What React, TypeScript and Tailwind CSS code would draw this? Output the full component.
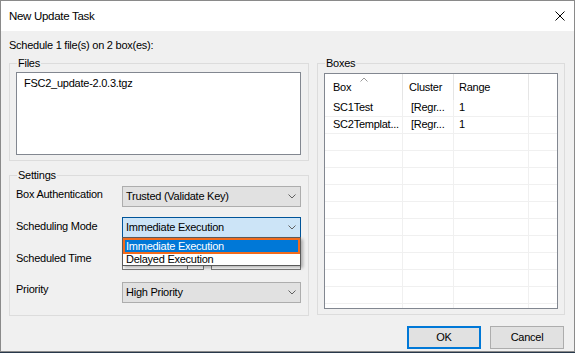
import React from 'react';

const font = "font-['Liberation_Sans',Arial,sans-serif] text-[11px] leading-[13px] tracking-[-0.25px] text-black";

function Chevron() {
  return (
    <svg width="8" height="5" viewBox="0 0 8 5" className="shrink-0">
      <path d="M0.5 0.5 L4 4 L7.5 0.5" fill="none" stroke="#606060" strokeWidth="1" />
    </svg>
  );
}

function Combo({ value, focused }: { value: string; focused?: boolean }) {
  return (
    <div
      className={
        focused
          ? 'h-[21px] w-[179px] border border-[#005499] bg-[#cce4f7] flex items-center justify-between pl-[3px] pr-[4px]'
          : 'h-[21px] w-[179px] border border-[#adadad] bg-[#e1e1e1] flex items-center justify-between pl-[3px] pr-[4px]'
      }
    >
      <span>{value}</span>
      <Chevron />
    </div>
  );
}

const rows = [
  { box: 'SC1Test', cluster: '[Regr...', range: '1' },
  { box: 'SC2Templat...', cluster: '[Regr...', range: '1' },
];

export default function App() {
  const filler = Array.from({ length: 13 - rows.length });

  return (
    <div className={`w-[575px] h-[353px] bg-[#27384a] overflow-hidden ${font}`}>
      <div className="h-[352px] border border-[#8a8a8a] flex flex-col bg-[#f0f0f0]">
        {/* title bar */}
        <div className="h-[30px] bg-white flex items-center justify-between pl-[8px] pr-[9px]">
          <span className="text-[11.5px] tracking-[-0.3px]">New Update Task</span>
          <svg width="10" height="10" viewBox="0 0 10 10">
            <path d="M0.5 0.5 L9.5 9.5 M9.5 0.5 L0.5 9.5" stroke="#000" strokeWidth="1" />
          </svg>
        </div>

        <div className="flex-1 flex flex-col pl-[8px] pr-[9px] pt-[8px]">
          <p>Schedule 1 file(s) on 2 box(es):</p>

          <div className="flex gap-[8px] mt-[5px]">
            {/* left column */}
            <div className="w-[300px] flex flex-col">
              <fieldset className="h-[104px] border border-[#dcdcdc] pl-[6px] pr-[7px]">
                <legend className="ml-[1px] px-[1px]">Files</legend>
                <div className="mt-[2px] h-[83px] border border-[#828790] bg-white pl-[7px] pt-[4px]">
                  FSC2_update-2.0.3.tgz
                </div>
              </fieldset>

              <fieldset className="mt-[8px] h-[147px] border border-[#dcdcdc] pl-[6px] pr-[7px]">
                <legend className="ml-[1px] px-[1px]">Settings</legend>
                <div className="mt-[4px] flex flex-col">
                  <div className="flex justify-between">
                    <span className="mt-[2px]">Box Authentication</span>
                    <Combo value="Trusted (Validate Key)" />
                  </div>
                  <div className="flex justify-between mt-[10px]">
                    <span className="mt-[3px]">Scheduling Mode</span>
                    <div className="relative">
                      <Combo value="Immediate Execution" focused />
                      <div className="absolute left-0 top-[20px] w-[179px] h-[29px] border border-[#5a5a5a] bg-white shadow-[2px_2px_3px_rgba(0,0,0,0.28)] z-10">
                        <div className="h-[16px] border-2 border-[#f26b1d] bg-[#0078d7] text-white pl-[1px] leading-[12px]">
                          Immediate Execution
                        </div>
                        <div className="h-[11px] pl-[3px] leading-[11px]">Delayed Execution</div>
                      </div>
                    </div>
                  </div>
                  <div className="flex justify-between mt-[11px]">
                    <span className="mt-[3px]">Scheduled Time</span>
                    <div className="flex gap-[7px]">
                      <div className="h-[21px] w-[82px] border border-[#7a7a7a] bg-white flex justify-end">
                        <div className="w-[16px] border-l border-[#7a7a7a]" />
                      </div>
                      <div className="h-[21px] w-[90px] border border-[#7a7a7a] bg-white" />
                    </div>
                  </div>
                  <div className="flex justify-between mt-[12px]">
                    <span className="mt-[1px]">Priority</span>
                    <Combo value="High Priority" />
                  </div>
                </div>
              </fieldset>
            </div>

            {/* right column */}
            <fieldset className="w-[248px] h-[258px] border border-[#dcdcdc] pl-[6px] pr-[6px]">
              <legend className="ml-[1px] px-[1px]">Boxes</legend>
              <div className="mt-[3px] h-[236px] border border-[#828790] bg-white overflow-hidden">
                <div className="h-[26px] flex">
                  <div className="relative w-[78px] border-r border-[#e5e5e5] flex items-center pl-[8px]">
                    <svg width="8" height="5" viewBox="0 0 8 5" className="absolute top-[3px] left-[35px]">
                      <path d="M0.5 4.5 L4 1 L7.5 4.5" fill="none" stroke="#9a9a9a" strokeWidth="1" />
                    </svg>
                    Box
                  </div>
                  <div className="w-[51px] border-r border-[#e5e5e5] flex items-center pl-[6px]">Cluster</div>
                  <div className="w-[75px] border-r border-[#e5e5e5] flex items-center pl-[5px]">Range</div>
                  <div className="flex-1" />
                </div>
                {rows.map((r) => (
                  <div key={r.box} className="h-[17px] flex border-b border-[#f0f0f0]">
                    <div className="w-[78px] border-r border-[#f0f0f0] pl-[8px] pt-[1px]">{r.box}</div>
                    <div className="w-[51px] border-r border-[#f0f0f0] pl-[8px] pt-[1px]">{r.cluster}</div>
                    <div className="w-[75px] border-r border-[#f0f0f0] pl-[5px] pt-[1px]">{r.range}</div>
                    <div className="flex-1" />
                  </div>
                ))}
                {filler.map((_, i) => (
                  <div key={i} className="h-[17px] flex border-b border-[#f0f0f0]">
                    <div className="w-[78px] border-r border-[#f0f0f0]" />
                    <div className="w-[51px] border-r border-[#f0f0f0]" />
                    <div className="w-[75px] border-r border-[#f0f0f0]" />
                    <div className="flex-1" />
                  </div>
                ))}
              </div>
            </fieldset>
          </div>

          {/* buttons */}
          <div className="mt-[10px] flex justify-end gap-[9px] pr-[1px]">
            <button className="w-[74px] h-[23px] border-2 border-[#0078d7] bg-[#e1e1e1]">OK</button>
            <button className="w-[74px] h-[23px] border border-[#adadad] bg-[#e1e1e1]">Cancel</button>
          </div>
        </div>
      </div>
    </div>
  );
}
